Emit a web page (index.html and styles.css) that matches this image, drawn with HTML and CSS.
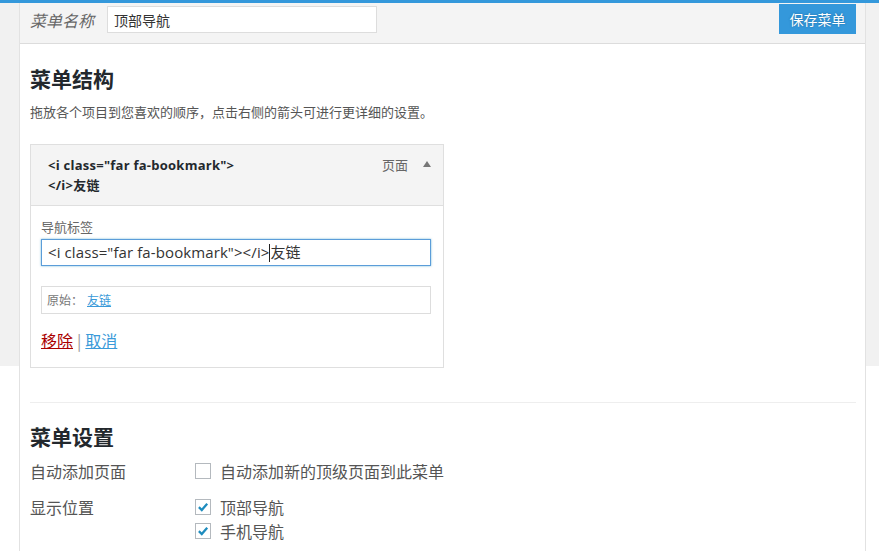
FILE: index.html
```html
<!DOCTYPE html>
<html lang="zh-CN">
<head>
<meta charset="utf-8">
<title>菜单</title>
<link rel="stylesheet" href="styles.css">
</head>
<body>
<div class="topbar"></div>
<div class="page">
  <div class="menu-box">
    <div class="menu-header">
      <span class="name-label">菜单名称</span>
      <input class="name-input" type="text" value="顶部导航">
      <button class="save-btn">保存菜单</button>
    </div>
    <div class="menu-body">
      <h3 class="section-title">菜单结构</h3>
      <p class="desc">拖放各个项目到您喜欢的顺序，点击右侧的箭头可进行更详细的设置。</p>

      <div class="item">
        <div class="item-bar">
          <div class="item-title">&lt;i class="far fa-bookmark"&gt;<br>&lt;/i&gt;友链</div>
          <div class="item-controls">
            <span class="item-type">页面</span>
            <span class="item-arrow"></span>
          </div>
        </div>
        <div class="item-settings">
          <label class="field-label">导航标签</label>
          <div class="field-input">&lt;i class="far fa-bookmark"&gt;&lt;/i&gt;<span class="caret"></span>友链</div>
          <div class="original">原始：<a href="#" class="orig-link">友链</a></div>
          <div class="actions"><a href="#" class="remove">移除</a><span class="sep">|</span><a href="#" class="cancel">取消</a></div>
        </div>
      </div>

      <hr class="divider">

      <h3 class="section-title settings-title">菜单设置</h3>
      <div class="setting-row">
        <div class="setting-name">自动添加页面</div>
        <div class="setting-opts">
          <label class="opt"><span class="cb"></span>自动添加新的顶级页面到此菜单</label>
        </div>
      </div>
      <div class="setting-row row-locations">
        <div class="setting-name">显示位置</div>
        <div class="setting-opts">
          <label class="opt"><span class="cb checked"><svg viewBox="0 0 16 16" width="14" height="14"><path d="M3.3 8.2 L6.6 11.4 L12.8 4.3" fill="none" stroke="#1e8cbe" stroke-width="2.6"/></svg></span>顶部导航</label>
          <label class="opt"><span class="cb checked"><svg viewBox="0 0 16 16" width="14" height="14"><path d="M3.3 8.2 L6.6 11.4 L12.8 4.3" fill="none" stroke="#1e8cbe" stroke-width="2.6"/></svg></span>手机导航</label>
        </div>
      </div>
    </div>
  </div>
</div>
</body>
</html>
```

FILE: styles.css
```css
html, body {
  margin: 0;
  padding: 0;
}
body {
  font-family: "Open Sans", "Noto Sans CJK SC", sans-serif;
  color: #444;
  background: linear-gradient(#f1f1f1 366px, #ffffff 366px);
  min-height: 551px;
}
.topbar {
  height: 3px;
  background: #3498db;
}
.page {
  margin: 0 13px 0 19px;
}
.menu-box {
  border-left: 1px solid #e2e2e2;
  border-right: 1px solid #e2e2e2;
  background: #fff;
  min-height: 548px;
}
.menu-header {
  height: 40px;
  background: #f4f4f4;
  border-bottom: 1px solid #dcdcdc;
  display: flex;
  align-items: flex-start;
  padding: 0 9px 0 10px;
}
.name-label {
  flex: 0 0 77px;
  display: block;
  font-family: "Noto Sans CJK SC", sans-serif;
  font-style: italic;
  font-size: 16px;
  color: #666;
  margin-top: 3px;
  line-height: 28px;
}
.name-input {
  flex: 0 0 270px;
  margin: 3px 0 0 0;
  width: 270px;
  height: 27px;
  box-sizing: border-box;
  border: 1px solid #ddd;
  background: #fff;
  padding: 0 6px;
  font-family: "Noto Sans CJK SC", sans-serif;
  font-size: 14px;
  color: #333;
  outline: none;
}
.save-btn {
  margin: 1px 0 0 auto;
  width: 77px;
  height: 30px;
  border: none;
  background: #3498db;
  color: #fff;
  font-family: "Noto Sans CJK SC", sans-serif;
  font-size: 14px;
  text-shadow: 0 0 2px rgba(0, 60, 100, 0.5);
  padding: 0;
}
.menu-body {
  padding: 0 9px 0 10px;
}
.section-title {
  font-family: "Noto Sans CJK SC", sans-serif;
  font-size: 21px;
  font-weight: 700;
  color: #23282d;
  margin: 0;
  padding-top: 19px;
  line-height: 30px;
}
.desc {
  font-family: "Noto Sans CJK SC", sans-serif;
  font-size: 13px;
  color: #555;
  margin: 9px 0 0;
  line-height: 20px;
}
.item {
  margin-top: 22px;
  width: 414px;
  box-sizing: border-box;
  border: 1px solid #dfdfdf;
  background: #fff;
}
.item-bar {
  background: #f4f4f4;
  border-bottom: 1px solid #dfdfdf;
  height: 61px;
  box-sizing: border-box;
  display: flex;
  justify-content: space-between;
  padding: 10px 12px 0 17px;
}
.item-title {
  font-size: 13px;
  font-weight: 700;
  letter-spacing: 0.25px;
  color: #23282d;
  line-height: 20px;
}
.item-controls {
  display: flex;
  align-items: flex-start;
  gap: 15px;
}
.item-type {
  font-family: "Noto Sans CJK SC", sans-serif;
  font-size: 13px;
  color: #666;
  line-height: 20px;
}
.item-arrow {
  width: 0;
  height: 0;
  border-left: 4px solid transparent;
  border-right: 4px solid transparent;
  border-bottom: 6px solid #777;
  margin-top: 6px;
}
.item-settings {
  padding: 12px 11px 15px 10px;
}
.field-label {
  display: block;
  font-family: "Noto Sans CJK SC", sans-serif;
  font-size: 13px;
  color: #666;
  line-height: 18px;
}
.field-input {
  margin-top: 3px;
  width: 390px;
  height: 27px;
  box-sizing: border-box;
  border: 1px solid #5b9dd9;
  box-shadow: 0 0 2px rgba(30, 140, 190, 0.6);
  padding: 0 6px;
  font-size: 15px;
  letter-spacing: 0.1px;
  color: #333;
  line-height: 25px;
  white-space: nowrap;
}
.caret {
  display: inline-block;
  width: 1px;
  height: 18px;
  background: #222;
  vertical-align: -4px;
}
.original {
  margin-top: 20px;
  width: 390px;
  height: 28px;
  box-sizing: border-box;
  border: 1px solid #ddd;
  padding: 0 5px;
  font-family: "Noto Sans CJK SC", sans-serif;
  font-size: 12px;
  color: #777;
  line-height: 26px;
}
.orig-link {
  color: #3a9ad9;
  margin-left: 4px;
}
.actions {
  margin-top: 14px;
  font-family: "Noto Sans CJK SC", sans-serif;
  font-size: 16px;
  line-height: 24px;
}
.remove {
  color: #a00;
}
.cancel {
  color: #3a9ad9;
}
.sep {
  color: #999;
  margin: 0 4px;
}
.divider {
  border: none;
  border-top: 1px solid #eee;
  margin: 34px 0 0;
}
.settings-title {
  padding-top: 18px;
}
.setting-row {
  display: flex;
  margin-top: 8px;
  font-family: "Noto Sans CJK SC", sans-serif;
  font-size: 16px;
  color: #555;
}
.row-locations {
  margin-top: 12px;
}
.setting-name {
  width: 165px;
  line-height: 24px;
}
.setting-opts {
  display: flex;
  flex-direction: column;
}
.opt {
  display: flex;
  align-items: center;
  height: 24px;
  color: #555;
}
.cb {
  width: 16px;
  height: 16px;
  box-sizing: border-box;
  border: 1px solid #b4b9be;
  background: #fff;
  margin-right: 9px;
  display: flex;
  align-items: center;
  justify-content: center;
}
.cb svg {
  display: block;
}
```
